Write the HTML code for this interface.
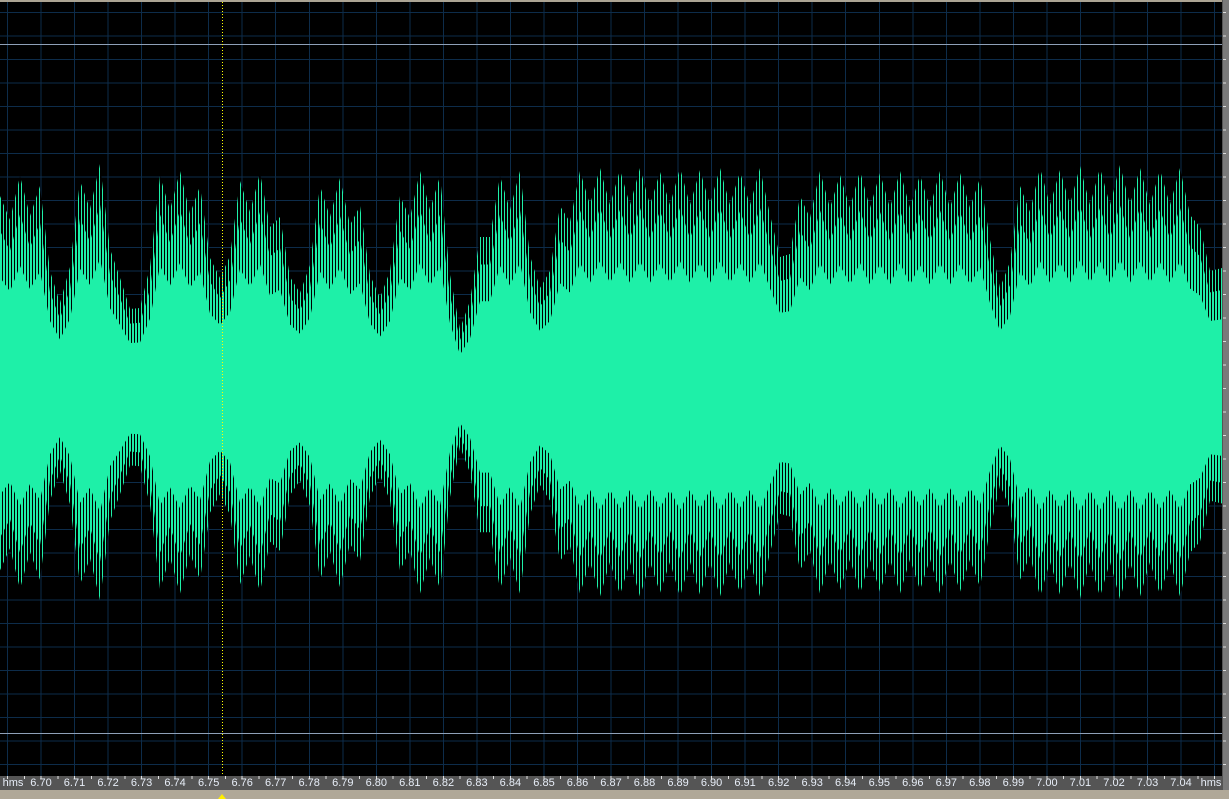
<!DOCTYPE html>
<html><head><meta charset="utf-8"><style>
html,body{margin:0;padding:0;background:#000;overflow:hidden;width:1229px;height:799px;position:relative}
div{position:absolute}
.grid{left:0;top:2px;width:1222px;height:774px;
background:repeating-linear-gradient(90deg,#0d2c4a 0 1px,transparent 1px 33.53px) 7px 0/100% 100%,
repeating-linear-gradient(180deg,#0d2c4a 0 1px,transparent 1px 23.5px) 0 10px/100% 100%;}
.w{left:0;top:0;width:1222px;height:390px;clip-path:polygon(0 196px,10px 220px,20px 176px,30px 216px,40px 186px,50px 271px,60px 303px,70px 267px,80px 181px,90px 209px,100px 164px,110px 249px,120px 278px,130px 309px,140px 308px,150px 267px,160px 176px,170px 210px,180px 171px,190px 214px,200px 186px,210px 258px,220px 278px,230px 256px,240px 181px,250px 212px,260px 173px,270px 227px,280px 217px,290px 277px,300px 293px,310px 265px,320px 186px,330px 217px,340px 178px,350px 225px,360px 206px,370px 275px,380px 298px,390px 271px,400px 196px,410px 218px,420px 171px,430px 210px,440px 176px,450px 275px,460px 329px,470px 301px,480px 237px,490px 237px,500px 176px,510px 210px,520px 171px,530px 256px,540px 288px,550px 271px,560px 206px,570px 222px,580px 171px,590px 205px,600px 168px,610px 205px,620px 170px,630px 205px,640px 168px,650px 205px,660px 172px,670px 205px,680px 168px,690px 205px,700px 170px,710px 205px,720px 168px,730px 205px,740px 172px,750px 205px,760px 168px,770px 215px,780px 257px,790px 254px,800px 196px,810px 218px,820px 171px,830px 208px,840px 175px,850px 208px,860px 171px,870px 208px,880px 173px,890px 208px,900px 171px,910px 208px,920px 175px,930px 208px,940px 171px,950px 208px,960px 173px,970px 208px,980px 178px,990px 240px,1000px 288px,1010px 262px,1020px 186px,1030px 212px,1040px 168px,1050px 205px,1060px 170px,1070px 205px,1080px 166px,1090px 205px,1100px 168px,1110px 205px,1120px 165px,1130px 205px,1140px 168px,1150px 205px,1160px 170px,1170px 205px,1180px 168px,1190px 215px,1200px 227px,1210px 271px,1222px 268px,1222px 390px,0 390px);}
.o{background:repeating-linear-gradient(90deg,#1ef0a8 0 1px,#000 1px 3px);}
.m{background:repeating-linear-gradient(90deg,#1ef0a8 0 2px,#000 2px 3px);transform:scaleY(.82);transform-origin:50% 390px}
.i{background:#1ef0a8;transform:scaleY(.58);transform-origin:50% 390px}
.ob{transform:scaleY(-.93);transform-origin:50% 390px}
.mb{transform:scaleY(-.76);transform-origin:50% 390px}
.ib{transform:scaleY(-.54);transform-origin:50% 390px}
.lab{top:777px;font:11px "Liberation Sans",sans-serif;color:#e8eef8;transform:translateX(-50%);white-space:nowrap}
</style></head><body>
<div style="left:0;top:0;width:1229px;height:2px;background:#aca493"></div>
<div class="grid"></div>
<div class="w o"></div>
<div class="w o ob"></div>
<div class="w m"></div>
<div class="w m mb"></div>
<div class="w i"></div>
<div class="w i ib"></div>
<div style="left:0;top:44px;width:1222px;height:1px;background:#8fa0b8"></div>
<div style="left:0;top:733px;width:1222px;height:1px;background:#8fa0b8"></div>
<div style="left:222px;top:2px;width:1px;height:774px;background:repeating-linear-gradient(180deg,#ff0 0 1px,transparent 1px 3px)"></div>
<div style="left:1222px;top:0;width:7px;height:799px;background:#7a7a7a;border-left:1px solid #555;box-sizing:border-box"></div>
<div style="left:1223px;top:12px;width:3px;height:764px;background:repeating-linear-gradient(180deg,#ddd 0 1px,transparent 1px 23.5px)"></div>
<div style="left:0;top:776px;width:1222px;height:14px;background:#555"></div>
<div style="left:7px;top:776px;width:1215px;height:3px;background:repeating-linear-gradient(90deg,#e0e0e0 0 1px,transparent 1px 16.765px)"></div>
<div style="left:0;top:790px;width:1229px;height:9px;background:#b0a898"></div>
<div style="left:218px;top:794px;width:0;height:0;border-left:4px solid transparent;border-right:4px solid transparent;border-bottom:5px solid #fe0"></div>
<div class="lab" style="left:13px">hms</div>
<div class="lab" style="left:1211px">hms</div>
<div class="lab" style="left:41.0px">6.70</div>
<div class="lab" style="left:74.5px">6.71</div>
<div class="lab" style="left:108.1px">6.72</div>
<div class="lab" style="left:141.6px">6.73</div>
<div class="lab" style="left:175.1px">6.74</div>
<div class="lab" style="left:208.7px">6.75</div>
<div class="lab" style="left:242.2px">6.76</div>
<div class="lab" style="left:275.7px">6.77</div>
<div class="lab" style="left:309.2px">6.78</div>
<div class="lab" style="left:342.8px">6.79</div>
<div class="lab" style="left:376.3px">6.80</div>
<div class="lab" style="left:409.8px">6.81</div>
<div class="lab" style="left:443.4px">6.82</div>
<div class="lab" style="left:476.9px">6.83</div>
<div class="lab" style="left:510.4px">6.84</div>
<div class="lab" style="left:544.0px">6.85</div>
<div class="lab" style="left:577.5px">6.86</div>
<div class="lab" style="left:611.0px">6.87</div>
<div class="lab" style="left:644.5px">6.88</div>
<div class="lab" style="left:678.1px">6.89</div>
<div class="lab" style="left:711.6px">6.90</div>
<div class="lab" style="left:745.1px">6.91</div>
<div class="lab" style="left:778.7px">6.92</div>
<div class="lab" style="left:812.2px">6.93</div>
<div class="lab" style="left:845.7px">6.94</div>
<div class="lab" style="left:879.3px">6.95</div>
<div class="lab" style="left:912.8px">6.96</div>
<div class="lab" style="left:946.3px">6.97</div>
<div class="lab" style="left:979.8px">6.98</div>
<div class="lab" style="left:1013.4px">6.99</div>
<div class="lab" style="left:1046.9px">7.00</div>
<div class="lab" style="left:1080.4px">7.01</div>
<div class="lab" style="left:1114.0px">7.02</div>
<div class="lab" style="left:1147.5px">7.03</div>
<div class="lab" style="left:1181.0px">7.04</div>
</body></html>
